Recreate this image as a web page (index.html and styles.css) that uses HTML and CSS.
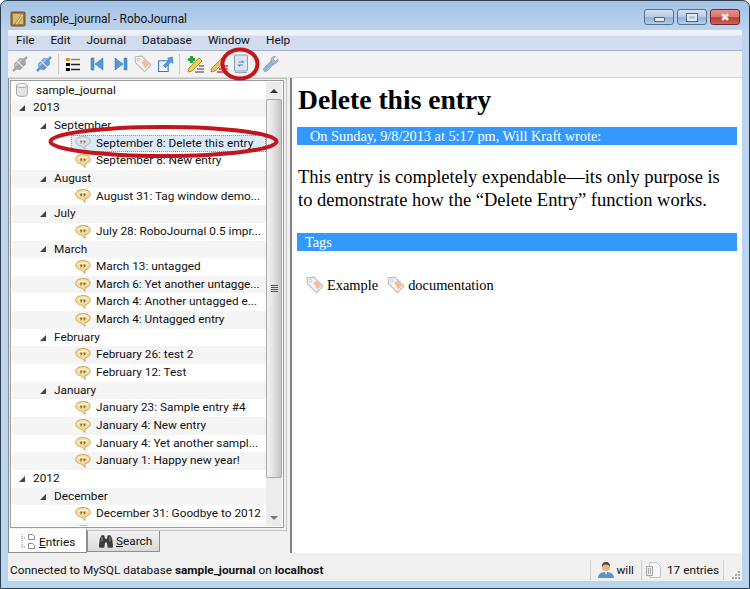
FILE: index.html
```html
<!DOCTYPE html>
<html lang="en">

<head>
    <title>sample_journal - RoboJournal</title>
    <link rel="stylesheet" href="styles.css">
</head>

<body>
    <!-- shared icons -->
    <svg class="defs" width="0" height="0">
        <symbol id="bubble" viewBox="0 0 16 16">
            <path d="M8 1.500C4 1.500.7 3.300.7 6.300c0 2.700 2.800 4.500 6 4.700l3.300 3.500V10.800c2.800-.6 5.300-2.200 5.300-4.500 0-3-3.300-4.800-7.300-4.800z" fill="#f5dc9c" stroke="#c8a860"/>
            <path d="M2.500 5.500C3.500 3.300 12.500 3.300 13.500 5.500 10.500 4.700 5.500 4.700 2.500 5.500z" fill="#fff6dc"/>
            <path d="M5.200 5.500h2v1.800l-1.200 1.200H5.200l.6-1.200h-.6zM8.500 5.500h2v1.800l-1.200 1.200H8.500l.6-1.200h-.6z" fill="#8c6c34"/>
        </symbol>
        <symbol id="tag" viewBox="0 0 16 16">
            <path d="M1 1.500l6-.5 8 8-5.500 5.800-8.200-8z" fill="#f4f4f4" stroke="#bdbdbd"/>
            <path d="M6.500 6l3-2 4 4.500-3.500 3.500z" fill="#f6bd96"/>
            <circle cx="4" cy="4" r="1.200" fill="#fff" stroke="#aaa" stroke-width=".6"/>
        </symbol>
        <symbol id="plug" viewBox="0 0 18 18">
            <g transform="rotate(-45 9 9)">
                <path d="M-1 7.800h3.500L5 4.500h3.500v9H5l-2.500-3.300H-1z" fill="currentColor"/>
                <path d="M19 7.800h-3.500L13 4.500H9.500v9H13l2.500-3.300H19z" fill="currentColor"/>
                <path d="M5 5.500h3.500v2.500H4zM9.500 5.500H13l1 2.500H9.500z" fill="#fff" opacity=".35"/>
            </g>
        </symbol>
    </svg>

    <div class="window">
        <div class="titlebar">
            <svg class="app-icon" width="16" height="16" viewBox="0 0 16 16">
                <rect x="1" y="1" width="14" height="14" rx="1" fill="#a8793f" stroke="#6e4a22"/>
                <rect x="3" y="3" width="10" height="10" fill="#d9b878"/>
                <path d="M5 13l7-10 2 1-7 10z" fill="#e9d27a" stroke="#7a5a2a" stroke-width=".5"/>
            </svg>
            <span class="title">sample_journal - RoboJournal</span>
            <div class="caption-buttons">
                <div class="caption-btn"><span class="glyph-min"></span></div>
                <div class="caption-btn"><span class="glyph-max"></span></div>
                <div class="caption-btn close"><span class="glyph-close">&#10006;</span></div>
            </div>
        </div>

        <div class="client">
            <div class="menubar">
                <span>File</span><span>Edit</span><span>Journal</span><span>Database</span><span>Window</span><span>Help</span>
            </div>

            <div class="toolbar">
                <svg class="tool muted" width="18" height="18"><use href="#plug"/></svg>
                <svg class="tool blue" width="18" height="18"><use href="#plug"/></svg>
                <div class="tool-sep"></div>
                <svg class="tool wide" width="16" height="16" viewBox="0 0 16 16">
                    <rect x="1" y="2" width="4" height="3" fill="#e08a2c"/><path d="M6 3.500h9" stroke="#b08050" stroke-width="1.500"/>
                    <rect x="1" y="7" width="4" height="3"/><path d="M6 8.500h9" stroke="#222" stroke-width="1.500"/>
                    <rect x="1" y="12" width="4" height="3"/><path d="M6 13.500h9" stroke="#222" stroke-width="1.500"/>
                </svg>
                <svg class="tool wide" width="16" height="16" viewBox="0 0 16 16">
                    <path d="M2 2h3v12H2zM14 2v12L6 8z" fill="#4f9be0" stroke="#2a6fb0" stroke-width=".5"/>
                </svg>
                <svg class="tool tight" width="16" height="16" viewBox="0 0 16 16">
                    <path d="M14 2h-3v12h3zM2 2v12l8-6z" fill="#4f9be0" stroke="#2a6fb0" stroke-width=".5"/>
                </svg>
                <svg class="tool tight" width="18" height="18"><use href="#tag"/></svg>
                <svg class="tool" width="17" height="17" viewBox="0 0 16 16">
                    <path d="M1.500 4.500h9v10h-9z" fill="#eaf2fb" stroke="#3b78bd"/>
                    <path d="M14.500 1l.5 6-1.800-1.500-5.200 5.500-2-2 5.300-5.300L10 2z" fill="#4f9be0" stroke="#2a6fb0" stroke-width=".5"/>
                </svg>
                <div class="tool-sep"></div>
                <svg class="tool thin" width="19" height="19" viewBox="0 0 19 19">
                    <path d="M9 17h9M11 14h7M13 11h5" stroke="#777" stroke-width="1.500"/>
                    <path d="M2 17l1-4L13 3l3 3L6 16z" fill="#f2cf50" stroke="#8a6d20" stroke-width=".7"/>
                    <path d="M4 1h3v2h2v3H7v2H4V6H2V3h2z" fill="#25a244"/>
                </svg>
                <svg class="tool tight" width="19" height="19" viewBox="0 0 19 19">
                    <path d="M8 17h11M10 14h9M12 11h7" stroke="#e03030" stroke-width="1.500"/>
                    <path d="M2 17l1-4L13 3l3 3L6 16z" fill="#f0c060" stroke="#a87020" stroke-width=".7"/>
                </svg>
                <svg class="tool far" width="16" height="20" viewBox="0 0 16 20">
                    <rect x="1.500" y="1" width="13" height="16" rx="1" fill="#dbe6f5" stroke="#8a9cb8"/>
                    <path d="M2 18.500h12" stroke="#9aa6b8"/>
                    <path d="M6 7.500h3V6l2.500 2.500H6zM10 11.500H7V13L4.500 10.500H10z" fill="#4a80c8"/>
                </svg>
                <svg class="tool" width="18" height="18" viewBox="0 0 18 18">
                    <path d="M2 16c-1-1-1-2 0-3l7-7 3 3-7 7c-1 1-2 1-3 0z" fill="#8fb3e0" stroke="#7f9cc4" stroke-width=".7"/>
                    <path d="M9 6c-.5-2 .5-4 3-4.500l1.500.2-2.500 2.300 2.500 2.500L16 4c.5 3-2 5-5 5z" fill="#b4bcc8" stroke="#8c96a6" stroke-width=".7"/>
                </svg>
            </div>

            <div class="main">
                <div class="sidebar">
                    <div class="tab-pane">
                        <div class="tree-frame">
                            <div class="tree">
                                <div class="row root">
                                    <svg class="db" width="12" height="14" viewBox="0 0 12 14">
                                        <path d="M.5 2.500v9c0 1 2.500 2 5.500 2s5.500-1 5.500-2v-9z" fill="#e4e4e4" stroke="#aaa"/>
                                        <ellipse cx="6" cy="2.500" rx="5.500" ry="2" fill="#f6f6f6" stroke="#aaa"/>
                                    </svg>
                                    sample_journal
                                </div>
                                <div class="row alt year"><i class="arrow"></i>2013</div>
                                <div class="row month"><i class="arrow"></i>September</div>
                                <div class="row alt entry selected"><svg class="bubble gray" width="16" height="16"><use href="#bubble"/></svg>September 8: Delete this entry</div>
                                <div class="row entry"><svg class="bubble" width="16" height="16"><use href="#bubble"/></svg>September 8: New entry</div>
                                <div class="row alt month"><i class="arrow"></i>August</div>
                                <div class="row entry"><svg class="bubble" width="16" height="16"><use href="#bubble"/></svg>August 31: Tag window demo...</div>
                                <div class="row alt month"><i class="arrow"></i>July</div>
                                <div class="row entry"><svg class="bubble" width="16" height="16"><use href="#bubble"/></svg>July 28: RoboJournal 0.5 impr...</div>
                                <div class="row alt month"><i class="arrow"></i>March</div>
                                <div class="row entry"><svg class="bubble" width="16" height="16"><use href="#bubble"/></svg>March 13: untagged</div>
                                <div class="row alt entry"><svg class="bubble" width="16" height="16"><use href="#bubble"/></svg>March 6: Yet another untagge...</div>
                                <div class="row entry"><svg class="bubble" width="16" height="16"><use href="#bubble"/></svg>March 4: Another untagged e...</div>
                                <div class="row alt entry"><svg class="bubble" width="16" height="16"><use href="#bubble"/></svg>March 4: Untagged entry</div>
                                <div class="row month"><i class="arrow"></i>February</div>
                                <div class="row alt entry"><svg class="bubble" width="16" height="16"><use href="#bubble"/></svg>February 26: test 2</div>
                                <div class="row entry"><svg class="bubble" width="16" height="16"><use href="#bubble"/></svg>February 12: Test</div>
                                <div class="row alt month"><i class="arrow"></i>January</div>
                                <div class="row entry"><svg class="bubble" width="16" height="16"><use href="#bubble"/></svg>January 23: Sample entry #4</div>
                                <div class="row alt entry"><svg class="bubble" width="16" height="16"><use href="#bubble"/></svg>January 4: New entry</div>
                                <div class="row entry"><svg class="bubble" width="16" height="16"><use href="#bubble"/></svg>January 4: Yet another sampl...</div>
                                <div class="row alt entry"><svg class="bubble" width="16" height="16"><use href="#bubble"/></svg>January 1: Happy new year!</div>
                                <div class="row year"><i class="arrow"></i>2012</div>
                                <div class="row alt month"><i class="arrow"></i>December</div>
                                <div class="row entry"><svg class="bubble" width="16" height="16"><use href="#bubble"/></svg>December 31: Goodbye to 2012</div>
                                <div class="row alt entry"><svg class="bubble" width="16" height="16"><use href="#bubble"/></svg>December 22: Another Sunday</div>
                            </div>
                            <div class="scrollbar">
                                <div class="scroll-up"></div>
                                <div class="scroll-thumb"><span class="grip"></span></div>
                                <div class="scroll-track"></div>
                                <div class="scroll-down"></div>
                            </div>
                        </div>
                    </div>
                    <div class="tabs">
                        <div class="tab active">
                            <svg width="16" height="18" viewBox="0 0 16 18">
                                <path d="M1 1v14M1 5h4M1 14h4" stroke="#888" stroke-dasharray="1 1"/>
                                <path d="M7.500 1.500h4l2 2v3h-6zM7.500 10.500h4l2 2v3h-6z" fill="#fff" stroke="#888"/>
                            </svg>
                            <span><u>E</u>ntries</span>
                        </div>
                        <div class="tab">
                            <svg width="16" height="15" viewBox="0 0 18 16">
                                <path d="M1 14l1-9 2-4h3l1 4h2l1-4h3l2 4 1 9-1 1h-5l-1-6H8l-1 6H2z" fill="#3c3c3c"/>
                                <path d="M4 3h1v5H4zM13 3h1v5h-1z" fill="#aaa"/>
                            </svg>
                            <span><u>S</u>earch</span>
                        </div>
                    </div>
                </div>

                <div class="splitter"></div>

                <div class="entry-view">
                    <h1>Delete this entry</h1>
                    <div class="meta">On Sunday, 9/8/2013 at 5:17 pm, Will Kraft wrote:</div>
                    <p>This entry is completely expendable—its only purpose is to demonstrate how the “Delete Entry” function works.</p>
                    <div class="tags-head">Tags</div>
                    <div class="tags">
                        <svg width="18" height="18"><use href="#tag"/></svg><span>Example</span>
                        <svg width="18" height="18"><use href="#tag"/></svg><span>documentation</span>
                    </div>
                </div>
            </div>

            <div class="statusbar">
                <div class="status-msg">Connected to MySQL database <b>sample_journal</b> on <b>localhost</b></div>
                <div class="status-cell">
                    <svg width="18" height="18" viewBox="0 0 18 18">
                        <path d="M1 17c0-4 3-6 8-6s8 2 8 6z" fill="#5b95cc"/>
                        <path d="M8 11l1 3 1-3z" fill="#fff"/>
                        <circle cx="9" cy="6" r="4" fill="#e4b48c"/>
                        <path d="M5 6c-.5-3 1.500-5 4-5s4.500 2 4 5c-1-2-2-2.500-4-2.500S6 4 5 6z" fill="#5a3a24"/>
                    </svg>
                    will
                </div>
                <div class="status-cell count">
                    <svg width="18" height="18" viewBox="0 0 18 18">
                        <path d="M4.500 1.500h7l4 4v11h-11z" fill="#f6f6f6" stroke="#c4c4c4"/>
                        <path d="M1.500 5.500h6v9h-6z" fill="#e8e8e8" stroke="#aaa"/>
                        <path d="M3.500 7v6M5.500 7v6" stroke="#aaa"/>
                    </svg>
                    17 entries
                </div>
                <div class="size-grip">
                    <svg width="8" height="8" viewBox="0 0 8 8" fill="#a8a8a8">
                        <rect x="6" y="0" width="2" height="2"/>
                        <rect x="3" y="3" width="2" height="2"/><rect x="6" y="3" width="2" height="2"/>
                        <rect x="0" y="6" width="2" height="2"/><rect x="3" y="6" width="2" height="2"/><rect x="6" y="6" width="2" height="2"/>
                    </svg>
                </div>
            </div>
        </div>

        <!-- red callouts drawn over the screenshot -->
        <svg class="callouts" width="750" height="589">
            <ellipse cx="163.500" cy="141.500" rx="113" ry="14.500" />
            <ellipse cx="240" cy="64" rx="17.500" ry="14.500" />
        </svg>
    </div>
</body>

</html>
```

FILE: styles.css
```css
html,
body {
    margin: 0;
    padding: 0;
    width: 750px;
    height: 589px;
    overflow: hidden;
    background-color: white;
    font-family: Roboto, "Noto Sans", sans-serif;
    font-size: 11.800px;
    color: #111;
}

.defs {
    position: absolute;
}

.window {
    position: relative;
    box-sizing: border-box;
    width: 750px;
    height: 589px;
    padding: 0 7px 7px 7px;
    display: flex;
    flex-direction: column;
    border-radius: 7px 7px 0 0;
    border: 1px solid #2c3e50;
    background: linear-gradient(to bottom, #a4c2e4, #bcd4ee 30px, #b9d4ee);
}

.titlebar {
    height: 29px;
    display: flex;
    align-items: center;
    flex-shrink: 0;
    padding-top: 6px;
    box-sizing: border-box;
}

.app-icon {
    margin: 0 4px 0 2px;
}

.title {
    font-size: 11.900px;
    color: #111;
}

.caption-buttons {
    margin-left: auto;
    margin-right: 2px;
    margin-top: -3px;
    display: flex;
    gap: 3px;
}

.caption-btn {
    width: 28px;
    height: 14px;
    border: 1px solid #5a6f8c;
    border-radius: 3px;
    display: flex;
    align-items: center;
    justify-content: center;
    background: linear-gradient(to bottom, #d4e2f2, #b4cbe6 50%, #8fb0d6 55%, #b4d0ec);
}

.caption-btn.close {
    border-color: #6e2a30;
    background: linear-gradient(to bottom, #e4928c, #d8756e 50%, #b73b30 55%, #d0645a);
}

.glyph-min {
    width: 9px;
    height: 3px;
    margin-top: 4px;
    background-color: #e8e8e8;
    border: 1px solid #55657c;
    border-radius: 1px;
}

.glyph-max {
    width: 6px;
    height: 3px;
    background-color: #b9cce2;
    border: 2px solid #e8e8e8;
    outline: 1px solid #55657c;
}

.glyph-close {
    color: #f2f2f2;
    font-size: 11px;
    line-height: 11px;
    font-family: "DejaVu Sans", sans-serif;
}

.client {
    flex: 1;
    min-height: 0;
    display: flex;
    flex-direction: column;
    background-color: #f0f0f0;
}

.menubar {
    height: 20px;
    flex-shrink: 0;
    display: flex;
    align-items: center;
    padding-left: 8px;
    gap: 16px;
    background: linear-gradient(to bottom, #eef3fa, #eef3fa 5px, #d3dcee 6px);
    border-bottom: 1px solid #a9b4cb;
}

.toolbar {
    height: 26px;
    flex-shrink: 0;
    display: flex;
    align-items: center;
    padding-left: 3px;
    background-color: #f3f3f3;
    border-bottom: 1px solid #d8d8d8;
}

.tool {
    flex-shrink: 0;
    margin-right: 6px;
    color: #2a2a2a;
}

.tool.wide {
    margin-right: 8px;
}

.tool.tight {
    margin-right: 5px;
}

.tool.thin {
    margin-right: 4px;
}

.tool.far {
    margin-right: 13px;
}

.tool.muted {
    color: #a4a4a4;
}

.tool.blue {
    color: #6496da;
}

.tool-sep {
    width: 1px;
    height: 20px;
    background-color: #c8c8c8;
    margin: 0 6px 0 -1px;
}

.main {
    flex: 1;
    min-height: 0;
    display: flex;
}

.sidebar {
    width: 279px;
    flex-shrink: 0;
    display: flex;
    flex-direction: column;
}

.tab-pane {
    flex: 1;
    min-height: 0;
    display: flex;
    padding: 1px 2px 2px 1px;
    border: 1px solid #c4c4c4;
    border-left-color: #8a8a8a;
}

.tree-frame {
    flex: 1;
    min-width: 0;
    display: flex;
    background-color: white;
    border: 1px solid #9c9c9c;
    padding: 1px;
}

.tree {
    flex: 1;
    min-width: 0;
    overflow: hidden;
    padding-top: 0;
}

.row {
    height: 17.660px;
    line-height: 17.660px;
    display: flex;
    align-items: center;
    white-space: nowrap;
    box-sizing: border-box;
    position: relative;
    top: -.4px;
}

.row.alt {
    background-color: #f5f5f5;
}

.root {
    padding-left: 4px;
    gap: 8px;
}

.year {
    padding-left: 7px;
}

.month {
    padding-left: 28px;
}

.entry {
    padding-left: 63px;
}

.arrow {
    width: 0;
    height: 0;
    margin-right: 8px;
    border-left: 6px solid transparent;
    border-bottom: 6px solid #444;
}

.bubble {
    margin-right: 5px;
    flex-shrink: 0;
}

.bubble.gray {
    filter: grayscale(1);
    opacity: .8;
}

.selected {
    margin-left: 59px;
    padding-left: 3px;
    background-color: #dcebfa !important;
    border: 1px dotted #d9822b;
}

.scrollbar {
    width: 16px;
    flex-shrink: 0;
    display: flex;
    flex-direction: column;
    background-color: #ececec;
}

.scroll-up,
.scroll-down {
    height: 17px;
    flex-shrink: 0;
    display: flex;
    align-items: center;
    justify-content: center;
}

.scroll-up::before {
    content: "";
    border: 4px solid transparent;
    border-bottom: 4px solid #333;
    margin-top: -4px;
}

.scroll-down::before {
    content: "";
    border: 4px solid transparent;
    border-top: 4px solid #777;
    margin-top: 4px;
}

.scroll-thumb {
    height: 379px;
    flex-shrink: 0;
    display: flex;
    align-items: center;
    justify-content: center;
    border: 1px solid #a8a8a8;
    border-radius: 2px;
    background: linear-gradient(to right, #f4f4f4, #dcdcdc 60%, #c4c4c4);
    box-sizing: border-box;
}

.scroll-track {
    flex: 1;
}

.grip {
    width: 7px;
    height: 7px;
    background: repeating-linear-gradient(to bottom, #555 0, #555 1px, #ddd 1px, #ddd 2px);
}

.tabs {
    height: 22px;
    flex-shrink: 0;
    display: flex;
    align-items: flex-start;
}

.tab {
    display: flex;
    align-items: center;
    gap: 2px;
    box-sizing: border-box;
    height: 21px;
    width: 73px;
    padding: 0 0 0 10px;
    border: 1px solid #8e8e8e;
    border-top: none;
    background: linear-gradient(to bottom, #f2f2f2, #dadada);
}

.tab.active {
    width: 79px;
    height: 24px;
    margin-top: -2px;
    padding: 2px 0 0 12px;
    border-left: 1px solid #8a8a8a;
    background: white;
}

.splitter {
    width: 3px;
    flex-shrink: 0;
}

.entry-view {
    flex: 1;
    min-width: 0;
    box-sizing: border-box;
    background-color: white;
    border-left: 2px solid #808080;
    padding: 6px 5px 0 5px;
    font-family: "Liberation Serif", serif;
    font-size: 18.500px;
    color: black;
}

.entry-view h1 {
    margin: 0 0 11px 0;
    font-size: 27.600px;
    line-height: 32px;
    padding-left: 1px;
}

.meta,
.tags-head {
    height: 18px;
    line-height: 18px;
    font-size: 14.300px;
    color: white;
    background-color: #3399ff;
}

.meta {
    padding-left: 13px;
}

.tags-head {
    padding-left: 8px;
    margin-bottom: 25px;
}

.entry-view p {
    margin: 21px 10px 21px 1px;
    line-height: 23px;
}

.tags {
    display: flex;
    align-items: center;
    font-size: 14.400px;
    padding-left: 9px;
}

.tags span {
    margin: 0 9px 0 3px;
}

.statusbar {
    height: 28px;
    flex-shrink: 0;
    box-sizing: border-box;
    display: flex;
    align-items: center;
    padding: 6px 0 0 2px;
    background-color: #f0f0f0;
}

.status-msg {
    margin-right: auto;
}

.status-cell {
    display: flex;
    align-items: center;
    gap: 1px;
    height: 20px;
    padding: 0 7px 0 6px;
    border-left: 1px solid #d0d0d0;
}

.status-cell.count {
    gap: 4px;
    padding: 0 4px 0 3px;
}

.size-grip {
    box-sizing: border-box;
    width: 19px;
    height: 20px;
    display: flex;
    align-items: flex-end;
    justify-content: flex-end;
    padding: 0 2px 1px 0;
    border-left: 1px solid #d0d0d0;
}

.callouts {
    position: absolute;
    top: -1px;
    left: -1px;
    pointer-events: none;
}

.callouts ellipse {
    fill: none;
    stroke: #c3151b;
    stroke-width: 4;
}
```
